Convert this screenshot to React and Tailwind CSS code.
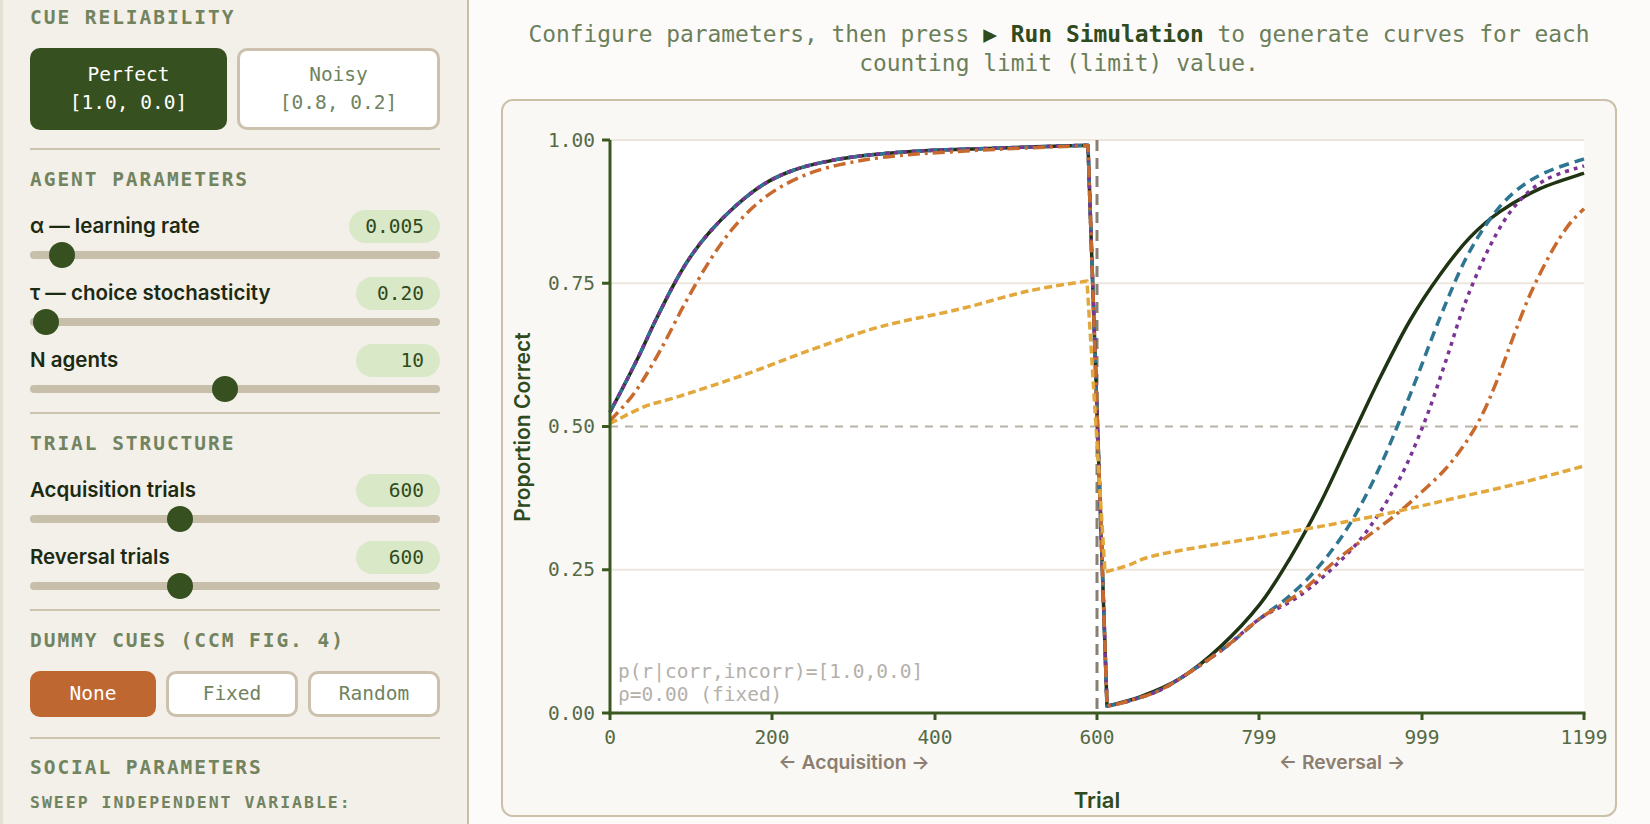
import React from 'react';

const MONO = '"DejaVu Sans Mono", "Liberation Mono", monospace';
const SANS = 'Inter, "Noto Sans", sans-serif';

// value (0..1) -> page y inside the plot box
const Y = (v) => 714 - 573 * v;

function spline(pts) {
  let d = '';
  for (let i = 0; i < pts.length - 1; i++) {
    const p0 = pts[i - 1] || pts[i];
    const p1 = pts[i];
    const p2 = pts[i + 1];
    const p3 = pts[i + 2] || p2;
    const c1x = p1[0] + (p2[0] - p0[0]) / 6;
    const c1y = p1[1] + (p2[1] - p0[1]) / 6;
    const c2x = p2[0] - (p3[0] - p1[0]) / 6;
    const c2y = p2[1] - (p3[1] - p1[1]) / 6;
    d += ` C${c1x.toFixed(1)},${c1y.toFixed(1)} ${c2x.toFixed(1)},${c2y.toFixed(1)} ${p2[0]},${p2[1].toFixed(1)}`;
  }
  return d;
}

function curvePath(acq, rev) {
  const a = acq.map(([x, v]) => [x, Y(v)]);
  const r = rev.map(([x, v]) => [x, Y(v)]);
  return `M${a[0][0]},${a[0][1].toFixed(1)}` + spline(a) + ` L${r[0][0]},${r[0][1].toFixed(1)}` + spline(r);
}

const acqFast = [[610, 0.525], [625, 0.575], [640, 0.627], [655, 0.683], [673, 0.745], [690, 0.795], [710, 0.84], [735, 0.884], [763, 0.922], [790, 0.945], [820, 0.96], [860, 0.972], [920, 0.981], [1000, 0.986], [1088, 0.991]];
const acqSlow = [[610, 0.51], [635, 0.56], [660, 0.632], [685, 0.715], [710, 0.79], [735, 0.85], [765, 0.9], [800, 0.935], [840, 0.957], [900, 0.973], [1000, 0.984], [1088, 0.99]];
const revStart = [[1107, 0.012], [1127, 0.02], [1160, 0.04], [1193, 0.075], [1227, 0.117], [1260, 0.165]];

const series = [
  {
    color: '#1f3412', dash: null,
    acq: acqFast,
    rev: [[1107, 0.012], [1140, 0.028], [1180, 0.06], [1220, 0.115], [1260, 0.19], [1290, 0.27], [1320, 0.365], [1350, 0.475], [1380, 0.585], [1410, 0.685], [1440, 0.765], [1470, 0.83], [1500, 0.875], [1540, 0.915], [1584, 0.942]],
  },
  {
    color: '#2e7592', dash: '10 6',
    acq: acqFast,
    rev: [...revStart, [1290, 0.205], [1320, 0.258], [1350, 0.33], [1380, 0.43], [1410, 0.555], [1440, 0.69], [1465, 0.79], [1490, 0.862], [1515, 0.91], [1545, 0.943], [1584, 0.967]],
  },
  {
    color: '#7a3594', dash: '4 5',
    acq: acqFast,
    rev: [...revStart, [1300, 0.205], [1340, 0.265], [1370, 0.325], [1400, 0.41], [1425, 0.51], [1445, 0.61], [1465, 0.715], [1490, 0.815], [1515, 0.885], [1545, 0.93], [1584, 0.955]],
  },
  {
    color: '#c8692d', dash: '12 5 3 5',
    acq: acqSlow,
    rev: [...revStart, [1300, 0.21], [1335, 0.265], [1365, 0.305], [1395, 0.345], [1420, 0.383], [1445, 0.425], [1465, 0.47], [1482, 0.52], [1497, 0.58], [1513, 0.655], [1530, 0.73], [1550, 0.8], [1568, 0.85], [1584, 0.88]],
  },
  {
    color: '#e2a83b', dash: '8 4',
    acq: [[610, 0.505], [645, 0.535], [680, 0.553], [747, 0.592], [813, 0.635], [880, 0.674], [960, 0.705], [1027, 0.736], [1087, 0.754]],
    rev: [[1105, 0.246], [1127, 0.257], [1160, 0.277], [1260, 0.307], [1350, 0.335], [1400, 0.353], [1450, 0.373], [1517, 0.4], [1584, 0.431]],
  },
];

function SectionLabel({ children, className = '' }) {
  return (
    <div className={`h-[24px] leading-[24px] font-['DejaVu_Sans_Mono',monospace] text-[19.5px] font-bold tracking-[0.1em] text-[#71845f] whitespace-nowrap ${className}`}>
      {children}
    </div>
  );
}

function Divider({ className = 'mt-[18px]' }) {
  return <div className={`h-[2px] bg-[#cdc4b0] ${className}`} />;
}

function SliderRow({ label, value, thumb }) {
  return (
    <div className="mt-[18px]">
      <div className="flex h-[33px] items-center justify-between">
        <span className="font-['Inter',sans-serif] text-[20.5px] font-semibold text-[#1c2a12]">{label}</span>
        <span className="h-[33px] min-w-[84px] rounded-full bg-[#d9e8c7] px-[16px] text-right font-['DejaVu_Sans_Mono',monospace] text-[19.5px] leading-[33px] text-[#2f4a1c]">
          {value}
        </span>
      </div>
      <div className="relative mt-[8px] h-[8px] rounded-full bg-[#c8bfab]">
        <div
          className="absolute top-1/2 h-[26px] w-[26px] -translate-x-1/2 -translate-y-1/2 rounded-full bg-[#36501f]"
          style={{ left: `${thumb}px` }}
        />
      </div>
    </div>
  );
}

function Sidebar() {
  const mono = "font-['DejaVu_Sans_Mono',monospace]";
  return (
    <aside className="h-full w-[469px] shrink-0 overflow-hidden border-l-[3px] border-r-2 border-l-[#e3dfd3] border-r-[#c8bea6] bg-[#f3efe9] pl-[27px] pr-[27px] pt-[6px]">
      <SectionLabel>CUE RELIABILITY</SectionLabel>
      <div className={`mt-[18px] flex gap-[10px] ${mono} text-[19.5px] leading-[28px]`}>
        <button className="flex h-[82px] flex-1 flex-col items-center justify-center rounded-[10px] bg-[#36501f] text-white">
          <span>Perfect</span>
          <span>[1.0, 0.0]</span>
        </button>
        <button className="flex h-[82px] flex-1 flex-col items-center justify-center rounded-[10px] border-[3px] border-[#cbc1ad] bg-white text-[#6f8360]">
          <span>Noisy</span>
          <span>[0.8, 0.2]</span>
        </button>
      </div>
      <Divider />

      <SectionLabel className="mt-[18px]">AGENT PARAMETERS</SectionLabel>
      <SliderRow label="α — learning rate" value="0.005" thumb={32} />
      <SliderRow label="τ — choice stochasticity" value="0.20" thumb={16} />
      <SliderRow label="N agents" value="10" thumb={195} />
      <Divider className="mt-[19px]" />

      <SectionLabel className="mt-[18px]">TRIAL STRUCTURE</SectionLabel>
      <SliderRow label="Acquisition trials" value="600" thumb={150} />
      <SliderRow label="Reversal trials" value="600" thumb={150} />
      <Divider className="mt-[19px]" />

      <SectionLabel className="mt-[18px]">DUMMY CUES (CCM FIG. 4)</SectionLabel>
      <div className={`mt-[18px] flex gap-[10px] ${mono} text-[19.5px]`}>
        <button className="h-[46px] flex-1 rounded-[10px] bg-[#bf6730] text-white">None</button>
        <button className="h-[46px] flex-1 rounded-[10px] border-[3px] border-[#cbc1ad] bg-white text-[#6f8360]">Fixed</button>
        <button className="h-[46px] flex-1 rounded-[10px] border-[3px] border-[#cbc1ad] bg-white text-[#6f8360]">Random</button>
      </div>
      <Divider className="mt-[20px]" />

      <SectionLabel className="mt-[17px]">SOCIAL PARAMETERS</SectionLabel>
      <div className={`mt-[11px] h-[24px] leading-[24px] ${mono} text-[16.5px] font-bold tracking-[0.12em] text-[#71845f]`}>
        SWEEP INDEPENDENT VARIABLE:
      </div>
    </aside>
  );
}

function Chart() {
  const yTicks = [
    { v: 1, label: '1.00' },
    { v: 0.75, label: '0.75' },
    { v: 0.5, label: '0.50' },
    { v: 0.25, label: '0.25' },
    { v: 0, label: '0.00' },
  ];
  const xTicks = [
    { x: 610, label: '0' },
    { x: 772, label: '200' },
    { x: 935, label: '400' },
    { x: 1097, label: '600' },
    { x: 1259, label: '799' },
    { x: 1422, label: '999' },
    { x: 1584, label: '1199' },
  ];
  return (
    <svg viewBox="503 102 1112 714" width="1112" height="714" className="block">
      <rect x="610" y="141" width="974" height="573" fill="#ffffff" />
      {[1, 0.75, 0.25].map((v) => (
        <line key={v} x1="610" x2="1584" y1={Y(v)} y2={Y(v)} stroke="#ece6dd" strokeWidth="2" />
      ))}
      <line x1="610" x2="1584" y1={Y(0.5)} y2={Y(0.5)} stroke="#bab2a6" strokeWidth="2" strokeDasharray="8 7" />
      <line x1="1097" x2="1097" y1="141" y2="714" stroke="#8a7f73" strokeWidth="3" strokeDasharray="11 7" />

      {series.map((s, i) => (
        <path
          key={i}
          d={curvePath(s.acq, s.rev)}
          fill="none"
          stroke={s.color}
          strokeWidth="3.5"
          strokeDasharray={s.dash || undefined}
          strokeLinejoin="round"
        />
      ))}

      <text x="618" y="672" dominantBaseline="central" fontFamily={MONO} fontSize="19.5" fill="#b4b0aa">
        p(r|corr,incorr)=[1.0,0.0]
      </text>
      <text x="618" y="695" dominantBaseline="central" fontFamily={MONO} fontSize="19.5" fill="#b4b0aa">
        ρ=0.00 (fixed)
      </text>

      {/* axes */}
      <line x1="610" x2="610" y1="141" y2="715.5" stroke="#3a5820" strokeWidth="3" />
      <line x1="608.5" x2="1585.5" y1="714" y2="714" stroke="#3a5820" strokeWidth="3" />
      {yTicks.map((t) => (
        <g key={t.label}>
          <line x1="602" x2="610" y1={Y(t.v)} y2={Y(t.v)} stroke="#3a5820" strokeWidth="3" />
          <text x="595" y={Y(t.v)} textAnchor="end" dominantBaseline="central" fontFamily={MONO} fontSize="19.5" fill="#556a46">
            {t.label}
          </text>
        </g>
      ))}
      {xTicks.map((t) => (
        <g key={t.label}>
          <line x1={t.x} x2={t.x} y1="714" y2="721" stroke="#3a5820" strokeWidth="3" />
          <text x={t.x} y="738" textAnchor="middle" dominantBaseline="central" fontFamily={MONO} fontSize="19.5" fill="#556a46">
            {t.label}
          </text>
        </g>
      ))}

      <text x="854" y="763" textAnchor="middle" dominantBaseline="central" fontFamily={SANS} fontWeight="600" fontSize="19.3" fill="#8c7e70">
        ← Acquisition →
      </text>
      <text x="1342" y="763" textAnchor="middle" dominantBaseline="central" fontFamily={SANS} fontWeight="600" fontSize="19.3" fill="#8c7e70">
        ← Reversal →
      </text>
      <text x="1097" y="801" textAnchor="middle" dominantBaseline="central" fontFamily={SANS} fontWeight="600" fontSize="22" fill="#2f4a1c">
        Trial
      </text>
      <text
        x="522"
        y="428"
        transform="rotate(-90 522 428)"
        textAnchor="middle"
        dominantBaseline="central"
        fontFamily={SANS}
        fontWeight="600"
        fontSize="21"
        fill="#2f4a1c"
      >
        Proportion Correct
      </text>
    </svg>
  );
}

export default function App() {
  return (
    <div className="flex h-[824px] w-full overflow-hidden bg-[#fcfbf9]">
      <Sidebar />
      <main className="min-w-0 flex-1 pl-[32px] pr-[33px] pt-[20px]">
        <p className="text-center font-['DejaVu_Sans_Mono',monospace] text-[22.9px] leading-[29px] text-[#6b7f5a]">
          Configure parameters, then press <span className="font-bold text-[#2f4a1c]">▶ Run Simulation</span> to generate curves for each counting limit (limit) value.
        </p>
        <div className="mt-[21px] h-[718px] overflow-hidden rounded-[12px] border-2 border-[#cbc1a9] bg-[#f9f8f5]">
          <Chart />
        </div>
      </main>
    </div>
  );
}
